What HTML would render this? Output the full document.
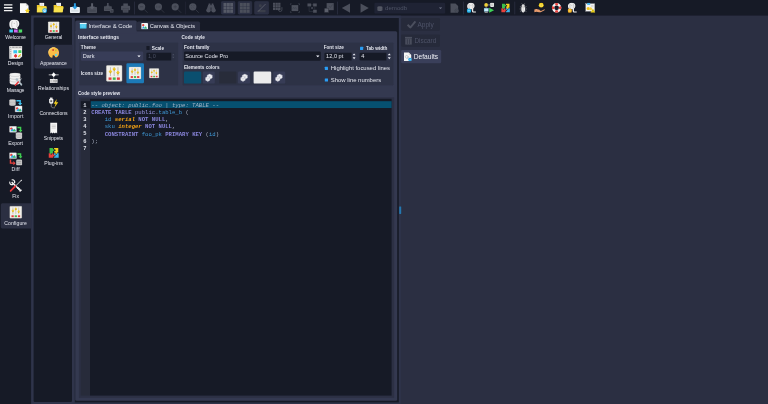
<!DOCTYPE html>
<html><head><meta charset="utf-8"><title>pgModeler - Configure</title>
<style>
html,body{margin:0;padding:0;width:768px;height:404px;overflow:hidden;background:#2b2f42}
#app{position:absolute;left:0;top:0;width:1920px;height:1010px;transform:scale(.4);transform-origin:0 0;filter:saturate(1.0001);font-family:"Liberation Sans",sans-serif;overflow:hidden}
#app div,#app span,#app svg{position:absolute;box-sizing:border-box}
#app span{white-space:pre;line-height:1}
#app span b,#app span u{text-decoration:none}
#app .m{font-family:"Liberation Mono",monospace}
#app .b{font-weight:bold}
</style></head><body><div id="app">
<div style="left:0px;top:0px;width:1920px;height:38.75px;background:#161a26;"></div>
<div style="left:0px;top:37.5px;width:77.75px;height:972.5px;background:#161a26;"></div>
<div style="left:77.75px;top:38.75px;width:924.25px;height:971.25px;background:#2f344a;"></div>
<div style="left:83.75px;top:44.25px;width:96.25px;height:960.5px;background:#161a26;border-radius:3px"></div>
<div style="left:186.5px;top:44.75px;width:810.75px;height:960.75px;background:#161a26;"></div>
<div style="left:188px;top:77.75px;width:805px;height:924.25px;background:#343950;border-radius:0 4px 4px 4px"></div>
<div style="left:188px;top:50.5px;width:153.5px;height:33.25px;background:#343950;border-radius:4px 4px 0 0"></div>
<div style="left:342.25px;top:53.5px;width:158px;height:23.75px;background:#2a2e41;border-radius:4px 4px 0 0"></div>
<div style="left:196.75px;top:104.5px;width:250.5px;height:110px;background:#2d3246;border:1px solid #3a3f58;border-radius:3px"></div>
<div style="left:454.75px;top:104.5px;width:529.75px;height:110px;background:#2d3246;border:1px solid #3a3f58;border-radius:3px"></div>
<div style="left:196px;top:241.5px;width:791.25px;height:754px;background:#2c3044;border:1.5px solid #3a4058;border-radius:3px"></div>
<div style="left:202px;top:247.25px;width:22.75px;height:741.25px;background:#272b3a;"></div>
<div style="left:224.75px;top:247.25px;width:754.5px;height:741.25px;background:#161a26;"></div>
<span style="left:195px;top:94.25px;font-size:12.4px;color:#e4e6ee;transform:translate(0,-50%);font-weight:bold;">Interface settings</span>
<span style="left:453.75px;top:94.25px;font-size:11.6px;color:#e4e6ee;transform:translate(0,-50%);font-weight:bold;">Code style</span>
<span style="left:195px;top:233px;font-size:11.65px;color:#e4e6ee;transform:translate(0,-50%);font-weight:bold;">Code style preview</span>
<span style="left:221px;top:64.5px;font-size:14.6px;color:#e4e6ee;transform:translate(0,-50%);">Interface &amp; Code</span>
<span style="left:374.25px;top:65.5px;font-size:14.2px;color:#e4e6ee;transform:translate(0,-50%);">Canvas &amp; Objects</span>
<span style="left:202px;top:117.75px;font-size:11.7px;color:#e4e6ee;transform:translate(0,-50%);font-weight:bold;">Theme</span>
<div style="left:202px;top:128.5px;width:155.75px;height:23px;background:#383d58;border-radius:3px"></div>
<span style="left:206.75px;top:140.25px;font-size:14px;color:#e4e6ee;transform:translate(0,-50%);">Dark</span>
<svg style="left:343px;top:137.5px;width:9px;height:5.5px" viewBox="0 0 10 6"><path d="M0 0H10L5 6Z" fill="#e8eaf2"/></svg>
<div style="left:365.75px;top:115px;width:8.25px;height:9.5px;background:#161a26;border-radius:1px"></div>
<span style="left:379.5px;top:119.75px;font-size:11.7px;color:#e4e6ee;transform:translate(0,-50%);font-weight:bold;">Scale</span>
<div style="left:365.75px;top:131.5px;width:72.5px;height:19px;background:#2b3043;border-radius:3px"></div>
<div style="left:365.75px;top:131.5px;width:62.25px;height:19px;background:#161a26;border-radius:3px 0 0 3px"></div>
<span style="left:370px;top:141px;font-size:14px;color:#4a4f63;transform:translate(0,-50%);">1,0</span>
<svg style="left:430px;top:133px;width:6.5px;height:14px" viewBox="0 0 10 22"><path d="M0 8H10L5 2Z M0 14H10L5 20Z" fill="#4a4f63"/></svg>
<span style="left:202px;top:183px;font-size:11.7px;color:#e4e6ee;transform:translate(0,-50%);font-weight:bold;">Icons size</span>
<div style="left:315.5px;top:158.25px;width:44px;height:49.75px;background:#1c7ab8;border-radius:3px"></div>
<span style="left:459.75px;top:118.25px;font-size:12px;color:#e4e6ee;transform:translate(0,-50%);font-weight:bold;">Font family</span>
<div style="left:459.75px;top:128.5px;width:342.5px;height:23px;background:#161a26;border-radius:3px"></div>
<span style="left:463px;top:140.25px;font-size:14px;color:#e4e6ee;transform:translate(0,-50%);">Source Code Pro</span>
<svg style="left:790px;top:137.5px;width:9px;height:5.5px" viewBox="0 0 10 6"><path d="M0 0H10L5 6Z" fill="#e8eaf2"/></svg>
<span style="left:809.25px;top:118.5px;font-size:11.6px;color:#e4e6ee;transform:translate(0,-50%);font-weight:bold;">Font size</span>
<div style="left:811.25px;top:131.5px;width:80px;height:19px;background:#30354a;border-radius:3px"></div>
<div style="left:811.25px;top:131.5px;width:67.25px;height:19px;background:#161a26;border-radius:3px 0 0 3px"></div>
<span style="left:815.25px;top:141px;font-size:14px;color:#e4e6ee;transform:translate(0,-50%);">12,0 pt</span>
<svg style="left:880.75px;top:132.25px;width:8.5px;height:17.5px" viewBox="0 0 10 22"><path d="M0 8H10L5 2Z M0 14H10L5 20Z" fill="#e8eaf2"/></svg>
<div style="left:899.25px;top:131.5px;width:79.75px;height:19px;background:#30354a;border-radius:3px"></div>
<div style="left:899.25px;top:131.5px;width:67px;height:19px;background:#161a26;border-radius:3px 0 0 3px"></div>
<span style="left:903.25px;top:141px;font-size:14px;color:#e4e6ee;transform:translate(0,-50%);">4</span>
<svg style="left:968.5px;top:132.25px;width:8.5px;height:17.5px" viewBox="0 0 10 22"><path d="M0 8H10L5 2Z M0 14H10L5 20Z" fill="#e8eaf2"/></svg>
<div style="left:900.25px;top:116.5px;width:7.75px;height:8px;background:#2a9df4;border-radius:1px"></div>
<span style="left:915px;top:120px;font-size:11.7px;color:#e4e6ee;transform:translate(0,-50%);font-weight:bold;">Tab width</span>
<span style="left:459.75px;top:168.5px;font-size:11.5px;color:#e4e6ee;transform:translate(0,-50%);font-weight:bold;">Elements colors</span>
<div style="left:459.75px;top:178.75px;width:43.5px;height:30px;background:#0a4f6f;border-radius:3px"></div>
<div style="left:507.25px;top:178.75px;width:29.75px;height:30px;background:#373c56;border-radius:3px"></div>
<svg style="left:510.88px;top:182.5px;width:22.5px;height:22.5px" viewBox="0 0 24 24"><g fill="#f4f4f6" stroke="#a9adbe" stroke-width="1" stroke-linejoin="round"><path d="M14 2l7 3.5v7L14 16l-7-3.500v-7z"/><path d="M9 9l6 3v6.500L9 22l-6-3.500V12z"/><path d="M3 12l6 3 6-3M9 15v7" fill="none"/><path d="M7 5.500l7 3.500 7-3.500M14 9v3" fill="none"/></g></svg>
<div style="left:547.5px;top:178.75px;width:43px;height:30px;background:#282c3a;border-radius:3px"></div>
<div style="left:595px;top:178.75px;width:30px;height:30px;background:#373c56;border-radius:3px"></div>
<svg style="left:598.75px;top:182.5px;width:22.5px;height:22.5px" viewBox="0 0 24 24"><g fill="#f4f4f6" stroke="#a9adbe" stroke-width="1" stroke-linejoin="round"><path d="M14 2l7 3.5v7L14 16l-7-3.500v-7z"/><path d="M9 9l6 3v6.500L9 22l-6-3.500V12z"/><path d="M3 12l6 3 6-3M9 15v7" fill="none"/><path d="M7 5.500l7 3.500 7-3.500M14 9v3" fill="none"/></g></svg>
<div style="left:634px;top:178.75px;width:44.25px;height:30px;background:#ececec;border-radius:3px"></div>
<div style="left:682.5px;top:178.75px;width:30px;height:30px;background:#373c56;border-radius:3px"></div>
<svg style="left:686.25px;top:182.5px;width:22.5px;height:22.5px" viewBox="0 0 24 24"><g fill="#f4f4f6" stroke="#a9adbe" stroke-width="1" stroke-linejoin="round"><path d="M14 2l7 3.5v7L14 16l-7-3.500v-7z"/><path d="M9 9l6 3v6.500L9 22l-6-3.500V12z"/><path d="M3 12l6 3 6-3M9 15v7" fill="none"/><path d="M7 5.500l7 3.500 7-3.500M14 9v3" fill="none"/></g></svg>
<div style="left:812px;top:167px;width:8px;height:8px;background:#2a9df4;border-radius:1px"></div>
<span style="left:827px;top:171.25px;font-size:14.8px;color:#e4e6ee;transform:translate(0,-50%);">Highlight focused lines</span>
<div style="left:812px;top:195.75px;width:8px;height:8px;background:#2a9df4;border-radius:1px"></div>
<span style="left:827px;top:199.75px;font-size:14.8px;color:#e4e6ee;transform:translate(0,-50%);">Show line numbers</span>
<div style="left:1002.75px;top:45.25px;width:97.5px;height:31.75px;background:#262a3a;border-radius:3px"></div>
<div style="left:1002.75px;top:85.5px;width:97.5px;height:31.75px;background:#262a3a;border-radius:3px"></div>
<div style="left:1002.75px;top:124.75px;width:99.75px;height:33.25px;background:#3a3f5a;border-radius:3px"></div>
<span style="left:1043.75px;top:61.5px;font-size:16.3px;color:#4e5368;transform:translate(0,-50%);">Apply</span>
<span style="left:1036.25px;top:101.5px;font-size:16px;color:#4e5368;transform:translate(0,-50%);">Discard</span>
<span style="left:1034.5px;top:141.5px;font-size:16.5px;color:#f0f1f6;transform:translate(0,-50%);">Defaults</span>
<svg style="left:1017px;top:51px;width:23.5px;height:20px" viewBox="0 0 24 20"><path d="M2 11l7 7L22 2" fill="none" stroke="#4b4f5e" stroke-width="5"/></svg>
<svg style="left:1012.25px;top:90.75px;width:18.5px;height:21.5px" viewBox="0 0 20 24"><path d="M0 1h20v4H0z M1 6h18v17H1z" fill="#4b4f5e"/><path d="M7 8v13M13 8v13" stroke="#262a3a" stroke-width="1.5"/></svg>
<div style="left:998.25px;top:515.5px;width:4.5px;height:19px;background:#2477b0;border-radius:1px"></div>
<div style="left:202px;top:252.5px;width:22.75px;height:18px;background:#161a26;"></div>
<div style="left:227px;top:253px;width:752.25px;height:17.25px;background:#065070;"></div>
<span class="m" style="left:212.25px;top:262.5px;font-size:13.5px;color:#dfe2ea;font-weight:bold;transform:translate(-50%,-50%)">1</span>
<span class="m" style="left:228.25px;top:262.5px;font-size:14px;color:#c8ccd8;transform:translate(0,-50%)"><u style="color:#a0b3c6;font-style:italic">-- object: public.foo | type: TABLE --</u></span>
<span class="m" style="left:212.25px;top:280.68px;font-size:13.5px;color:#dfe2ea;font-weight:bold;transform:translate(-50%,-50%)">2</span>
<span class="m" style="left:228.25px;top:280.68px;font-size:14px;color:#c8ccd8;transform:translate(0,-50%)"><b style="color:#8a86dc">CREATE TABLE</b> <u style="color:#9c98e6">public</u><u style="color:#a9afc0">.</u><u style="color:#3f9ad8">table_b</u> <u style="color:#a9afc0">(</u></span>
<span class="m" style="left:212.25px;top:298.85px;font-size:13.5px;color:#dfe2ea;font-weight:bold;transform:translate(-50%,-50%)">3</span>
<span class="m" style="left:228.25px;top:298.85px;font-size:14px;color:#c8ccd8;transform:translate(0,-50%)">    <u style="color:#3f9ad8">id</u> <b style="color:#f2a114;font-style:italic">serial</b> <b style="color:#8a86dc">NOT NULL</b><u style="color:#a9afc0">,</u></span>
<span class="m" style="left:212.25px;top:317.02px;font-size:13.5px;color:#dfe2ea;font-weight:bold;transform:translate(-50%,-50%)">4</span>
<span class="m" style="left:228.25px;top:317.02px;font-size:14px;color:#c8ccd8;transform:translate(0,-50%)">    <u style="color:#3f9ad8">sku</u> <b style="color:#f2a114;font-style:italic">integer</b> <b style="color:#8a86dc">NOT NULL</b><u style="color:#a9afc0">,</u></span>
<span class="m" style="left:212.25px;top:335.2px;font-size:13.5px;color:#dfe2ea;font-weight:bold;transform:translate(-50%,-50%)">5</span>
<span class="m" style="left:228.25px;top:335.2px;font-size:14px;color:#c8ccd8;transform:translate(0,-50%)">    <b style="color:#8a86dc">CONSTRAINT</b> <u style="color:#3f9ad8">foo_pk</u> <b style="color:#8a86dc">PRIMARY KEY</b> <u style="color:#a9afc0">(</u><u style="color:#3f9ad8">id</u><u style="color:#a9afc0">)</u></span>
<span class="m" style="left:212.25px;top:353.38px;font-size:13.5px;color:#dfe2ea;font-weight:bold;transform:translate(-50%,-50%)">6</span>
<span class="m" style="left:228.25px;top:353.38px;font-size:14px;color:#c8ccd8;transform:translate(0,-50%)"><u style="color:#a9afc0">);</u></span>
<span class="m" style="left:212.25px;top:371.55px;font-size:13.5px;color:#dfe2ea;font-weight:bold;transform:translate(-50%,-50%)">7</span>
<div style="left:1.5px;top:508px;width:76.25px;height:63px;background:#2b2f42;border-radius:4px 0 0 4px"></div>
<svg style="left:22.75px;top:48.5px;width:33px;height:33px" viewBox="0 0 32 32"><g transform="translate(-3.500,-1.500) scale(1.12)"><path d="M14 1C7 1 3 5 3 11c0 5 2 9 6 10l2-2c2 2 4 2 6 1v4c0 4 2 6 5 6h7v-3h-6c-2 0-2-1-2-3v-6c3-2 4-5 4-8 0-6-4-9-11-9z" fill="#f4f4f4"/><path d="M10 5c-2 4-2 9-.5 13M18 4c3 4 3 9 1.500 13M13 9.500h2.500" stroke="#b0b0b0" stroke-width="1.500" fill="none"/></g><rect x="0" y="22.800" width="32" height="9.200" fill="#161a26"/><rect x="0" y="24" width="9" height="7.600" fill="#3fd0f4"/><rect x="11.500" y="24" width="9" height="7.600" fill="#cf66ee"/><rect x="23" y="24" width="9" height="7.600" fill="#4ddc66"/></svg>
<span style="left:38.87px;top:92.5px;font-size:12.8px;color:#e4e6ee;transform:translate(-50%,-50%);letter-spacing:-0.266px;">Welcome</span>
<svg style="left:22.75px;top:115px;width:33px;height:33px" viewBox="0 0 32 32"><path d="M.5.500h31V25l-6 6H.5z" fill="#f6f6f3"/><path d="M31.500 25h-6v6z" fill="#c9c9c9"/><rect x=".5" y=".5" width="31" height="6" fill="#d9d9d9"/><rect x=".5" y=".5" width="6" height="30.500" fill="#e2e2e2"/><path d="M3 3.500h28" stroke="#777" stroke-width="3" stroke-dasharray="1.200 2.300"/><path d="M3.500 8v23" stroke="#888" stroke-width="3" stroke-dasharray="1.200 3.300"/><rect x="10.200" y="10.200" width="9" height="7.500" fill="#38c4f2"/><rect x="22.200" y="10.200" width="7.400" height="6.800" fill="#45d45a"/><path d="M15.600 19.500l4 4.500-4 4.500-4-4.500z" fill="#e8353a"/><circle cx="15.600" cy="24" r="3.300" fill="#e8353a"/><path d="M21 27.500l1-3 5-5 2 2-5 5z" fill="#e2c21c"/></svg>
<span style="left:38.93px;top:159px;font-size:12.8px;color:#e4e6ee;transform:translate(-50%,-50%);letter-spacing:-0.140px;">Design</span>
<svg style="left:22.75px;top:181.5px;width:33px;height:33px" viewBox="0 0 32 32"><path d="M1 4.64v19.72c0 6.032 26 6.032 26 0v-19.72z" fill="#f1f1f1"/><ellipse cx="14.0" cy="4.64" rx="13.0" ry="4.64" fill="#f1f1f1" stroke="#b4b4b4" stroke-width="1"/><path d="M1 11.213333333333333c0 6.032 26 6.032 26 0M1 17.786666666666665c0 6.032 26 6.032 26 0" stroke="#b4b4b4" stroke-width="1.200" fill="none"/><path d="M18 16l12 13" stroke="#b9c6ce" stroke-width="3.200"/><circle cx="18.500" cy="16.500" r="3" fill="#aebcc5"/><circle cx="29.500" cy="28.500" r="2.600" fill="#aebcc5"/><path d="M30 14l-8 8.500" stroke="#c5d0d6" stroke-width="2.200"/><path d="M22 22.500l-7 7.500" stroke="#e8353a" stroke-width="3.600" stroke-linecap="round"/></svg>
<span style="left:38.77px;top:225.5px;font-size:12.8px;color:#e4e6ee;transform:translate(-50%,-50%);letter-spacing:-0.459px;">Manage</span>
<svg style="left:22.75px;top:248px;width:33px;height:33px" viewBox="0 0 32 32"><path d="M0 2.56v10.879999999999999c0 3.3280000000000003 15.5 3.3280000000000003 15.5 0v-10.879999999999999z" fill="#d6d6d6"/><ellipse cx="7.75" cy="2.56" rx="7.75" ry="2.56" fill="#d6d6d6" stroke="#a4a4a4" stroke-width="1"/><path d="M0 6.1866666666666665c0 3.3280000000000003 15.5 3.3280000000000003 15.5 0M0 9.813333333333333c0 3.3280000000000003 15.5 3.3280000000000003 15.5 0" stroke="#a4a4a4" stroke-width="1.200" fill="none"/><path d="M17.500 3.800h9v7" stroke="#3cc0ee" stroke-width="3.600" fill="none"/><path d="M21.500 9.500h10l-5 5.500z" fill="#3cc0ee"/><rect x="14.5" y="16.5" width="17" height="14.5" rx="1" fill="#f6f6f6" stroke="#c4c4c4"/><circle cx="19.26" cy="22.3" r="2.9000000000000004" fill="#e8413c"/><path d="M16.5 29.0l5.1 -7.25 3.4000000000000004 4.35 2.55 -3.625 3.4000000000000004 6.525z" fill="#35a7e8"/><path d="M22.15 29.0l3.74 -6.525 3.74 6.525z" fill="#43c356"/></svg>
<span style="left:39.23px;top:292px;font-size:12.8px;color:#e4e6ee;transform:translate(-50%,-50%);letter-spacing:0.455px;">Import</span>
<svg style="left:22.75px;top:314.5px;width:33px;height:33px" viewBox="0 0 32 32"><rect x="0.5" y="0.5" width="17" height="14.5" rx="1" fill="#f6f6f6" stroke="#c4c4c4"/><circle cx="5.260000000000001" cy="6.300000000000001" r="2.9000000000000004" fill="#e8413c"/><path d="M2.5 13.0l5.1 -7.25 3.4000000000000004 4.35 2.55 -3.625 3.4000000000000004 6.525z" fill="#35a7e8"/><path d="M8.15 13.0l3.74 -6.525 3.74 6.525z" fill="#43c356"/><path d="M20 3.800h7.500v7" stroke="#3fcf52" stroke-width="3.600" fill="none"/><path d="M22.500 9.500h10l-5 5.500z" fill="#3fcf52"/><path d="M16 18.06v10.879999999999999c0 3.3280000000000003 15.5 3.3280000000000003 15.5 0v-10.879999999999999z" fill="#d6d6d6"/><ellipse cx="23.75" cy="18.06" rx="7.75" ry="2.56" fill="#d6d6d6" stroke="#a4a4a4" stroke-width="1"/><path d="M16 21.686666666666664c0 3.3280000000000003 15.5 3.3280000000000003 15.5 0M16 25.313333333333333c0 3.3280000000000003 15.5 3.3280000000000003 15.5 0" stroke="#a4a4a4" stroke-width="1.200" fill="none"/></svg>
<span style="left:39px;top:358.5px;font-size:12.8px;color:#e4e6ee;transform:translate(-50%,-50%);letter-spacing:0.001px;">Export</span>
<svg style="left:22.75px;top:381px;width:33px;height:33px" viewBox="0 0 32 32"><rect x="0.5" y="0.5" width="17" height="14.5" rx="1" fill="#f6f6f6" stroke="#c4c4c4"/><circle cx="5.260000000000001" cy="6.300000000000001" r="2.9000000000000004" fill="#e8413c"/><path d="M2.5 13.0l5.1 -7.25 3.4000000000000004 4.35 2.55 -3.625 3.4000000000000004 6.525z" fill="#35a7e8"/><path d="M8.15 13.0l3.74 -6.525 3.74 6.525z" fill="#43c356"/><path d="M20 3.800h7.500v7" stroke="#3fcf52" stroke-width="3.600" fill="none"/><path d="M22.500 9.500h10l-5 5.500z" fill="#3fcf52"/><path d="M3 17v9h8" stroke="#e8413c" stroke-width="3.600" fill="none"/><path d="M10 21v10l5.500-5z" fill="#e8413c"/><rect x="17" y="17" width="14.500" height="14.500" rx="3" fill="#c4c4c4"/><path d="M19.500 22h9.500M19.500 26.500h9.500" stroke="#8d8d8d" stroke-width="1.400"/></svg>
<span style="left:39.19px;top:425px;font-size:12.8px;color:#e4e6ee;transform:translate(-50%,-50%);letter-spacing:0.383px;">Diff</span>
<svg style="left:22.75px;top:447.5px;width:33px;height:33px" viewBox="0 0 32 32"><path d="M6 7l20 19" stroke="#f4f4f4" stroke-width="3.600"/><path d="M1.500 6a5.500 5.500 0 0 0 8 6.500M6 1.500a5.500 5.500 0 0 1 6.500 8" stroke="#f4f4f4" stroke-width="3" fill="none"/><path d="M30.500 26a5.500 5.500 0 0 1-8-6.500M26 30.500a5.500 5.500 0 0 0-6.500-8" stroke="#f4f4f4" stroke-width="3" fill="none"/><path d="M29 3L16 16" stroke="#f4f4f4" stroke-width="2"/><path d="M31.500.5l-4.500 2 2.500 2.500z" fill="#f4f4f4"/><path d="M15 17L3.500 28.500" stroke="#e8353a" stroke-width="4.400" stroke-linecap="round"/></svg>
<span style="left:38.95px;top:491.5px;font-size:12.8px;color:#e4e6ee;transform:translate(-50%,-50%);letter-spacing:-0.104px;">Fix</span>
<svg style="left:22.75px;top:514px;width:33px;height:33px" viewBox="0 0 32 32"><rect x="1.500" y="1.500" width="29" height="29" rx="1.500" fill="#f3f1ec" stroke="#c9c6be" stroke-width="1"/><path d="M9 4.500V21M16 4.500V21M23 4.500V21" stroke="#a29f97" stroke-width="1.200"/><path d="M5.500 12h7l-3.500 4.500z M12.500 7.500h7l-3.500 4.500z M19.500 14h7l-3.500 4.500z" fill="#e3b30c"/><circle cx="9" cy="11.500" r="2" fill="#f2c928"/><circle cx="16" cy="7" r="2" fill="#f2c928"/><circle cx="23" cy="13.500" r="2" fill="#f2c928"/><rect x="5.500" y="23.500" width="5.500" height="4.500" fill="#e23b3b"/><rect x="13.250" y="23.500" width="5.500" height="4.500" fill="#3fb54a"/><rect x="21" y="23.500" width="5.500" height="4.500" fill="#e23b3b"/></svg>
<span style="left:39.07px;top:558px;font-size:12.8px;color:#e4e6ee;transform:translate(-50%,-50%);letter-spacing:0.139px;">Configure</span>
<div style="left:86px;top:111.75px;width:94.5px;height:58.75px;background:#2b2f42;border-radius:5px 0 0 5px"></div>
<svg style="left:118.75px;top:53px;width:30.5px;height:30.5px" viewBox="0 0 32 32"><rect x="1.500" y="1.500" width="29" height="29" rx="1.500" fill="#f3f1ec" stroke="#c9c6be" stroke-width="1"/><path d="M9 4.500V21M16 4.500V21M23 4.500V21" stroke="#a29f97" stroke-width="1.200"/><path d="M5.500 12h7l-3.500 4.500z M12.500 7.500h7l-3.500 4.500z M19.500 14h7l-3.500 4.500z" fill="#e3b30c"/><circle cx="9" cy="11.500" r="2" fill="#f2c928"/><circle cx="16" cy="7" r="2" fill="#f2c928"/><circle cx="23" cy="13.500" r="2" fill="#f2c928"/><rect x="5.500" y="23.500" width="5.500" height="4.500" fill="#e23b3b"/><rect x="13.250" y="23.500" width="5.500" height="4.500" fill="#3fb54a"/><rect x="21" y="23.500" width="5.500" height="4.500" fill="#e23b3b"/></svg>
<span style="left:133.6px;top:94.75px;font-size:12.8px;color:#e4e6ee;transform:translate(-50%,-50%);letter-spacing:-0.291px;">General</span>
<svg style="left:118.75px;top:115.87px;width:30.5px;height:30.5px" viewBox="0 0 32 32"><path d="M16 2C8 2 2 8 2 16c0 7 4 13 9 13.500 2 .2 2.500-1.500 2-3-.5-2 1-3.500 3-3 2 .5 3 2.500 4 4.500 1 1.500 3 1.500 5 0 3.500-2.500 5-7 5-12C30 8 24 2 16 2z" fill="#fbbd45"/><path d="M16 2C8 2 2 8 2 16c0 2 .3 4 1 5.500C3.500 12 9 5 20 2.700 18.700 2.200 17.400 2 16 2z" fill="#fdd274" opacity=".8"/><circle cx="14.500" cy="9.500" r="2.500" fill="#d6432e"/><circle cx="21.500" cy="10.500" r="2.200" fill="#b9c43c"/><circle cx="25.500" cy="16.500" r="2.300" fill="#d8b58c"/><circle cx="22" cy="22.500" r="3" fill="#4fd8f7"/></svg>
<span style="left:133.64px;top:157.62px;font-size:12.8px;color:#e4e6ee;transform:translate(-50%,-50%);letter-spacing:-0.228px;">Appearance</span>
<svg style="left:118.75px;top:178.75px;width:30.5px;height:30.5px" viewBox="0 0 32 32"><path d="M3 8.500H29" stroke="#e6e6e6" stroke-width="2"/><path d="M16 2l5.500 6.500L16 15l-5.500-6.500z" fill="#fff"/><path d="M16 15v5" stroke="#cfcfcf" stroke-width="1.500"/><rect x="6" y="19.500" width="20" height="10" fill="#f1f1f1"/><path d="M9 22v5M12.500 22.500v1M12.500 25.500v1M16 22v5M19 22h4v5h-4z" stroke="#555" stroke-width="1.200" fill="none"/></svg>
<span style="left:133.77px;top:220.5px;font-size:12.8px;color:#e4e6ee;transform:translate(-50%,-50%);letter-spacing:0.032px;">Relationships</span>
<svg style="left:118.75px;top:241.62px;width:30.5px;height:30.5px" viewBox="0 0 32 32"><rect x="6" y="2" width="7" height="4" fill="#e8e8e8"/><path d="M4 6h11v8c0 2-1.500 4-5.500 4S4 16 4 14z" fill="#f4f4f4"/><rect x="7" y="9" width="5" height="5" fill="#666"/><path d="M9.500 18v6c0 3 2 5 6 5h4" stroke="#bdbdbd" stroke-width="1.600" fill="none"/><path d="M24 6l-8 12h5l-3 10 10-14h-5.500z" fill="#f7d21e"/></svg>
<span style="left:133.72px;top:283.38px;font-size:12.8px;color:#e4e6ee;transform:translate(-50%,-50%);letter-spacing:-0.059px;">Connections</span>
<svg style="left:118.75px;top:304.5px;width:30.5px;height:30.5px" viewBox="0 0 32 32"><path d="M7 2h18v28l-3-2.500-3 2.500-3-2.500-3 2.500-3-2.500L7 30z" fill="#f6f6f6"/><path d="M10.500 8h11M10.500 12h11M10.500 16h11" stroke="#bdbdbd" stroke-width="1.800"/></svg>
<span style="left:133.65px;top:346.25px;font-size:12.8px;color:#e4e6ee;transform:translate(-50%,-50%);letter-spacing:-0.195px;">Snippets</span>
<svg style="left:118.75px;top:367.38px;width:30.5px;height:30.5px" viewBox="0 0 32 32"><path d="M5 3h9v4c1.500-1.500 4-.5 4 1.500s-2.500 3-4 1.500V16H10c1.500 1.500.5 4-1.500 4S5.500 17.500 7 16H5z" fill="#3cc04a" transform="translate(0,0)"/><path d="M17 3h11v12h-4c1.500 1.500.5 4-1.500 4s-3-2.500-1.500-4h-4v-4c1.500 1.500 4 .5 4-1.500S18.500 5.500 17 7z" fill="#f4d21f"/><path d="M3 17h5c-1.500 1.500-.5 4 1.500 4s3-2.500 1.500-4h4v4c1.500-1.500 4-.5 4 1.500s-2.500 3-4 1.500V29H3z" fill="#e8413c"/><path d="M17 17h4c-1.500 1.500-.5 4 1.500 4s3-2.500 1.500-4h5v12H17v-4c1.500 1.500 4 .5 4-1.500s-2.500-3-4-1.500z" fill="#3db4ea"/></svg>
<span style="left:133.75px;top:409.12px;font-size:12.8px;color:#e4e6ee;transform:translate(-50%,-50%);letter-spacing:0.001px;">Plug-ins</span>
<svg style="left:263.88px;top:161.5px;width:43px;height:43px" viewBox="0 0 32 32"><rect x="1.500" y="1.500" width="29" height="29" rx="1.500" fill="#f3f1ec" stroke="#c9c6be" stroke-width="1"/><path d="M9 4.500V21M16 4.500V21M23 4.500V21" stroke="#a29f97" stroke-width="1.200"/><path d="M5.500 12h7l-3.500 4.500z M12.500 7.500h7l-3.500 4.500z M19.500 14h7l-3.500 4.500z" fill="#e3b30c"/><circle cx="9" cy="11.500" r="2" fill="#f2c928"/><circle cx="16" cy="7" r="2" fill="#f2c928"/><circle cx="23" cy="13.500" r="2" fill="#f2c928"/><rect x="5.500" y="23.500" width="5.500" height="4.500" fill="#e23b3b"/><rect x="13.250" y="23.500" width="5.500" height="4.500" fill="#3fb54a"/><rect x="21" y="23.500" width="5.500" height="4.500" fill="#e23b3b"/></svg>
<svg style="left:321px;top:166.25px;width:33px;height:33px" viewBox="0 0 32 32"><rect x="1.500" y="1.500" width="29" height="29" rx="1.500" fill="#f3f1ec" stroke="#c9c6be" stroke-width="1"/><path d="M9 4.500V21M16 4.500V21M23 4.500V21" stroke="#a29f97" stroke-width="1.200"/><path d="M5.500 12h7l-3.500 4.500z M12.500 7.500h7l-3.500 4.500z M19.500 14h7l-3.500 4.500z" fill="#e3b30c"/><circle cx="9" cy="11.500" r="2" fill="#f2c928"/><circle cx="16" cy="7" r="2" fill="#f2c928"/><circle cx="23" cy="13.500" r="2" fill="#f2c928"/><rect x="5.500" y="23.500" width="5.500" height="4.500" fill="#e23b3b"/><rect x="13.250" y="23.500" width="5.500" height="4.500" fill="#3fb54a"/><rect x="21" y="23.500" width="5.500" height="4.500" fill="#e23b3b"/></svg>
<svg style="left:372px;top:169.5px;width:26.5px;height:26.5px" viewBox="0 0 32 32"><rect x="1.500" y="1.500" width="29" height="29" rx="1.500" fill="#f3f1ec" stroke="#c9c6be" stroke-width="1"/><path d="M9 4.500V21M16 4.500V21M23 4.500V21" stroke="#a29f97" stroke-width="1.200"/><path d="M5.500 12h7l-3.500 4.500z M12.500 7.500h7l-3.500 4.500z M19.500 14h7l-3.500 4.500z" fill="#e3b30c"/><circle cx="9" cy="11.500" r="2" fill="#f2c928"/><circle cx="16" cy="7" r="2" fill="#f2c928"/><circle cx="23" cy="13.500" r="2" fill="#f2c928"/><rect x="5.500" y="23.500" width="5.500" height="4.500" fill="#e23b3b"/><rect x="13.250" y="23.500" width="5.500" height="4.500" fill="#3fb54a"/><rect x="21" y="23.500" width="5.500" height="4.500" fill="#e23b3b"/></svg>
<svg style="left:199px;top:56.5px;width:18px;height:15px" viewBox="0 0 30 26"><rect x="0" y="0" width="30" height="26" rx="2" fill="#3ec6f0"/><rect x="0" y="0" width="30" height="6" fill="#eaf7fc"/><path d="M4 12h22M4 17h22M11 9v13M19 9v13" stroke="#8adcf5" stroke-width="1.500"/></svg>
<svg style="left:353px;top:57px;width:17px;height:16.5px" viewBox="0 0 30 28"><rect x="0" y="0" width="30" height="28" rx="2" fill="#f4f4f4"/><circle cx="9" cy="10" r="5" fill="#e8413c"/><path d="M3 25l7-11 5 7 4-5 8 9z" fill="#35a7e8"/><path d="M13 25l6-10 6 10z" fill="#43c356"/></svg>
<svg style="left:1007.25px;top:129.5px;width:24px;height:24px" viewBox="0 0 32 32"><path d="M4 2h16l8 8v20H4z" fill="#f6f6f6"/><path d="M20 2v8h8z" fill="#d6d6d6"/><circle cx="13" cy="16" r="4.500" fill="none" stroke="#9aa0aa" stroke-width="3" stroke-dasharray="2.400 1.400"/><circle cx="19" cy="21" r="3" fill="none" stroke="#b0b5be" stroke-width="2.200" stroke-dasharray="1.800 1.200"/><circle cx="24" cy="25" r="6" fill="#27a9ea"/><path d="M21 25l2.200 2.200 3.800-4.200" stroke="#e8f7ff" stroke-width="1.800" fill="none"/></svg>
<div style="left:553.25px;top:3px;width:34.25px;height:33px;background:#2b2f42;border-radius:3px;border:1px solid #363b52"></div>
<div style="left:594.5px;top:3px;width:35.25px;height:33px;background:#2b2f42;border-radius:3px;border:1px solid #363b52"></div>
<div style="left:636px;top:3px;width:35.75px;height:33px;background:#2b2f42;border-radius:3px;border:1px solid #363b52"></div>
<svg style="left:8.75px;top:8.25px;width:23px;height:23px" viewBox="0 0 32 32"><path d="M1 6h30M1 16h30M1 26h30" stroke="#f4f4f4" stroke-width="4.800"/></svg>
<svg style="left:49.25px;top:6.5px;width:26.5px;height:26.5px" viewBox="0 0 32 32"><path d="M1 1h18l8 8v22H1z" fill="#fbfbfb"/><path d="M19 1v8h8z" fill="#cfcfcf"/><path d="M23.500 16l2.400 5 5.500.8-4 3.800 1 5.400-4.900-2.600-4.900 2.600 1-5.400-4-3.800 5.500-.8z" fill="#f5d327"/></svg>
<svg style="left:90.75px;top:6.25px;width:27px;height:27px" viewBox="0 0 32 32"><path d="M9 1h14v15H9z" fill="#f7f7f7"/><path d="M12 5h8M12 8.500h8" stroke="#bdbdbd" stroke-width="1.500"/><path d="M1 8h9l2 3h18l-2 18H1z" fill="#ecc92e"/><path d="M1 29l3-15h27l-3.500 15z" fill="#f8e24e"/><circle cx="24.500" cy="24.500" r="7" fill="#1ea3ea"/><circle cx="24.500" cy="24.500" r="4.400" fill="#d9f1fc"/><path d="M24.500 21.500v3h2.500" stroke="#1ea3ea" stroke-width="1.400" fill="none"/></svg>
<svg style="left:133.25px;top:6.25px;width:27px;height:27px" viewBox="0 0 32 32"><path d="M9 1h14v15H9z" fill="#f7f7f7"/><path d="M12 5h8M12 8.500h8" stroke="#bdbdbd" stroke-width="1.500"/><path d="M1 8h9l2 3h18l-2 18H1z" fill="#ecc92e"/><path d="M1 29l3-15h27l-3.500 15z" fill="#f8e24e"/></svg>
<svg style="left:174.25px;top:6.5px;width:26.5px;height:26.5px" viewBox="0 0 32 32"><rect x="1" y="13" width="30" height="18" rx="2.500" fill="#eef3f6"/><path d="M5 24.500h22" stroke="#b9c6cf" stroke-width="2.400"/><path d="M1 19h30" stroke="#b9c6cf" stroke-width="1" opacity=".6"/><path d="M13 1h6v10h5.500L16 20 7.500 11H13z" fill="#2aa0e6"/></svg>
<svg style="left:216.75px;top:6.5px;width:26.5px;height:26.5px" viewBox="0 0 32 32"><rect x="1" y="13" width="30" height="18" rx="2.500" fill="#4b4f5b"/><path d="M5 24.500h22" stroke="#3a3e4a" stroke-width="2.400"/><path d="M1 19h30" stroke="#3a3e4a" stroke-width="1" opacity=".6"/><path d="M13 1h6v10h5.500L16 20 7.500 11H13z" fill="#5a5e6a"/></svg>
<svg style="left:258.5px;top:6.5px;width:26.5px;height:26.5px" viewBox="0 0 32 32"><g transform="scale(.8)"><rect x="1" y="13" width="30" height="18" rx="2.500" fill="#4b4f5b"/><path d="M5 24.500h22" stroke="#3a3e4a" stroke-width="2.400"/><path d="M1 19h30" stroke="#3a3e4a" stroke-width="1" opacity=".6"/><path d="M13 1h6v10h5.500L16 20 7.500 11H13z" fill="#4b4f5b"/></g><rect x="19" y="19" width="11" height="11" rx="2" fill="#4b4f5b"/><rect x="21.500" y="22" width="6" height="6" fill="#3a3e4a"/></svg>
<svg style="left:301px;top:6.75px;width:26px;height:26px" viewBox="0 0 32 32"><rect x="9" y="2" width="14" height="8" fill="#4b4f5b"/><rect x="2" y="9" width="28" height="14" rx="3" fill="#4b4f5b"/><rect x="8" y="18" width="16" height="12" fill="#4b4f5b" stroke="#3a3e4a" stroke-width="1.500"/><path d="M11 23h10M11 26.500h10" stroke="#3a3e4a" stroke-width="1.400"/></svg>
<svg style="left:344.25px;top:6.5px;width:26.5px;height:26.5px" viewBox="0 0 32 32"><circle cx="12" cy="12" r="11" fill="#4b4f5b"/><path d="M19 19l11 11" stroke="#3a3e4a" stroke-width="2.200"/><path d="M7 12h10" stroke="#3a3e4a" stroke-width="2.400"/></svg>
<svg style="left:385.75px;top:6.5px;width:26.5px;height:26.5px" viewBox="0 0 32 32"><circle cx="12" cy="12" r="11" fill="#4b4f5b"/><path d="M19 19l11 11" stroke="#3a3e4a" stroke-width="2.200"/><path d="M7 9v6M10.500 10.500v.1M10.500 14v.1M14 9v6M17 9v6" stroke="#3a3e4a" stroke-width="1.600"/></svg>
<svg style="left:428px;top:6.5px;width:26.5px;height:26.5px" viewBox="0 0 32 32"><circle cx="12" cy="12" r="11" fill="#4b4f5b"/><path d="M19 19l11 11" stroke="#3a3e4a" stroke-width="2.200"/><path d="M7 12h10M12 7v10" stroke="#3a3e4a" stroke-width="2.400"/></svg>
<svg style="left:471.75px;top:6.5px;width:26.5px;height:26.5px" viewBox="0 0 32 32"><circle cx="12" cy="12" r="11" fill="#4b4f5b"/><path d="M19 19l11 11" stroke="#3a3e4a" stroke-width="2.200"/><path d="M7 7l3 3M17 7l-3 3M7 17l3-3M17 17l-3-3" stroke="#3a3e4a" stroke-width="1.600"/></svg>
<svg style="left:514px;top:6.25px;width:27px;height:27px" viewBox="0 0 32 32"><path d="M9 3h5v10H9z M18 3h5v10h-5z" fill="#4b4f5b"/><path d="M8 7l-5 15h12V7z M24 7l5 15H17V7z" fill="#4b4f5b"/><circle cx="8.500" cy="23.500" r="6.500" fill="#4b4f5b"/><circle cx="23.500" cy="23.500" r="6.500" fill="#4b4f5b"/><rect x="13" y="9" width="6" height="6" fill="#4b4f5b"/></svg>
<svg style="left:681.5px;top:6.25px;width:27px;height:27px" viewBox="0 0 32 32"><g transform="scale(.72)"><rect x="0.5" y="0.5" width="9.600" height="9.600" fill="#4b4f5b"/><rect x="11.2" y="0.5" width="9.600" height="9.600" fill="#4b4f5b"/><rect x="21.9" y="0.5" width="9.600" height="9.600" fill="#4b4f5b"/><rect x="0.5" y="11.2" width="9.600" height="9.600" fill="#4b4f5b"/><rect x="11.2" y="11.2" width="9.600" height="9.600" fill="#4b4f5b"/><rect x="21.9" y="11.2" width="9.600" height="9.600" fill="#4b4f5b"/><rect x="0.5" y="21.9" width="9.600" height="9.600" fill="#4b4f5b"/><rect x="11.2" y="21.9" width="9.600" height="9.600" fill="#4b4f5b"/><rect x="21.9" y="21.9" width="9.600" height="9.600" fill="#4b4f5b"/></g><path d="M27 14v8a5 5 0 0 1-10 0v-2" stroke="#4b4f5b" stroke-width="2.400" fill="none"/><path d="M13.500 22l3.500-4 3.500 4z" fill="#4b4f5b"/></svg>
<svg style="left:724.25px;top:6.5px;width:26.5px;height:26.5px" viewBox="0 0 32 32"><rect x="6" y="7" width="20" height="18" fill="#4b4f5b"/><path d="M2 7V3h4M26 3h4v4M30 25v4h-4M6 29H2v-4" stroke="#4b4f5b" stroke-width="1.600" fill="none"/><path d="M9 19l3-6 3 5 3-4 4 6" stroke="#3a3e4a" stroke-width="1.600" fill="none"/></svg>
<svg style="left:766.75px;top:6.5px;width:26.5px;height:26.5px" viewBox="0 0 32 32"><rect x="2" y="2" width="11" height="9" fill="#4b4f5b"/><rect x="19" y="2" width="11" height="9" fill="#4b4f5b"/><rect x="19" y="21" width="11" height="9" fill="#4b4f5b"/><path d="M7 11v15h12M13 6h6M24 11v10" stroke="#3a3e4a" stroke-width="1.600" fill="none"/><path d="M13 13h6v6h-6z" fill="#3a3e4a"/></svg>
<svg style="left:809px;top:6.25px;width:27px;height:27px" viewBox="0 0 32 32"><rect x="9" y="2" width="21" height="21" fill="#4b4f5b"/><rect x="2" y="17" width="13" height="13" fill="#5a5e6a" stroke="#161a26" stroke-width="1"/><path d="M16 11l4 4 7-9" stroke="#3a3e4a" stroke-width="2" fill="none"/></svg>
<svg style="left:851.25px;top:5.5px;width:28.5px;height:28.5px" viewBox="0 0 32 32"><path d="M27 3v26L4 16z" fill="#4b4f5b"/></svg>
<svg style="left:896.75px;top:5.5px;width:28.5px;height:28.5px" viewBox="0 0 32 32"><path d="M5 3v26l23-13z" fill="#4b4f5b"/></svg>
<svg style="left:1122.5px;top:6.5px;width:26.5px;height:26.5px" viewBox="0 0 32 32"><path d="M4 2h15l8 8v20H4z" fill="#4b4f5b"/><circle cx="23" cy="24" r="5.500" fill="#4b4f5b" stroke="#3a3e4a" stroke-width="1.600"/><circle cx="23" cy="24" r="1.800" fill="#3a3e4a"/></svg>
<svg style="left:1166.5px;top:6.25px;width:27px;height:27px" viewBox="0 0 32 32"><g transform="translate(-2,0)"><path d="M14 1C7 1 3 5 3 11c0 5 2 9 6 10l2-2c2 2 4 2 6 1v4c0 4 2 6 5 6h7v-3h-6c-2 0-2-1-2-3v-6c3-2 4-5 4-8 0-6-4-9-11-9z" fill="#ececec"/><path d="M10 5c-2 4-2 9-.5 13M18 4c3 4 3 9 1.500 13M13 9.500h2.500" stroke="#a9a9a9" stroke-width="1.500" fill="none"/></g><circle cx="6.500" cy="24.500" r="6.500" fill="#23b4ec"/><path d="M3.500 24.500c2-2.500 4-2.500 6 0-2 2.500-4 2.500-6 0z" fill="#9fdcf7"/></svg>
<svg style="left:1209px;top:6.25px;width:27px;height:27px" viewBox="0 0 32 32"><circle cx="7.500" cy="7.500" r="5.500" fill="#f0d23a"/><path d="M13 7.500h7" stroke="#d8d8d8" stroke-width="1.600"/><rect x="19.500" y="1" width="11.500" height="12.500" rx="2.500" fill="#e6e6e6"/><path d="M22 5.500h6.500M22 9h6.500" stroke="#a8a8a8" stroke-width="1.300"/><path d="M7.500 13v5" stroke="#d8d8d8" stroke-width="1.600"/><rect x="1.500" y="17.500" width="12.500" height="9" fill="#c6ecfb" stroke="#7fcff2" stroke-width="1.200"/><rect x="3" y="27.500" width="9.500" height="3.500" fill="#9a9a9a"/><path d="M16.500 16l14.500 7.500-14.500 7.500z" fill="#3fd457"/></svg>
<svg style="left:1250.75px;top:6.75px;width:26px;height:26px" viewBox="0 0 32 32"><path d="M5 3h9v4c1.500-1.500 4-.5 4 1.500s-2.500 3-4 1.500V16H10c1.500 1.500.5 4-1.500 4S5.500 17.500 7 16H5z" fill="#3cc04a" transform="translate(0,0)"/><path d="M17 3h11v12h-4c1.500 1.500.5 4-1.500 4s-3-2.500-1.500-4h-4v-4c1.500 1.500 4 .5 4-1.500S18.500 5.500 17 7z" fill="#f4d21f"/><path d="M3 17h5c-1.500 1.500-.5 4 1.500 4s3-2.500 1.500-4h4v4c1.500-1.500 4-.5 4 1.500s-2.500 3-4 1.500V29H3z" fill="#e8413c"/><path d="M17 17h4c-1.500 1.500-.5 4 1.500 4s3-2.500 1.500-4h5v12H17v-4c1.500 1.500 4 .5 4-1.500s-2.500-3-4-1.500z" fill="#3db4ea"/></svg>
<svg style="left:1294.5px;top:6.75px;width:26px;height:26px" viewBox="0 0 32 32"><ellipse cx="16" cy="19" rx="5.800" ry="10.500" fill="#f1f1f1"/><path d="M11 9.500a5 5 0 0 1 10 0z" fill="#dcdcdc"/><path d="M11.500 2l2.500 3.500M20.500 2L18 5.500" stroke="#cfcfcf" stroke-width="1.400"/><path d="M10.500 14L6 11.500M10 19H5M10.500 24L6 27M21.500 14l4.500-2.500M22 19h5M21.500 24l4.500 3" stroke="#cfcfcf" stroke-width="1.300"/><path d="M16 12v17" stroke="#a5a5a5" stroke-width="1.200"/><path d="M10.500 12.500h11" stroke="#9a9a9a" stroke-width="1.600"/></svg>
<svg style="left:1335px;top:6px;width:27.5px;height:27.5px" viewBox="0 0 32 32"><circle cx="21" cy="8" r="7" fill="#f5d21c"/><circle cx="21" cy="8" r="4.400" fill="#f9e35e"/><path d="M21 5v6M19.500 6.500h3M19.500 9.500h3" stroke="#d9b10f" stroke-width="1"/><path d="M1 21c3-2 6-2 9-1l6 1.500c2 .3 2 2.500 0 2.500h-3l9 .5 7-4c1.500-.8 3 .8 1.500 2L21 28c-2 1-4 1-6 .5L7 27l-6 1.500z" fill="#e69a6c"/></svg>
<svg style="left:1377.75px;top:6.25px;width:27px;height:27px" viewBox="0 0 32 32"><circle cx="16" cy="16" r="10.500" fill="none" stroke="#f5f5f5" stroke-width="7"/><path d="M16 2a14 14 0 0 1 9.900 4.100l-4.950 4.950A7 7 0 0 0 16 9z" fill="#e8413c" transform="rotate(-22.500 16 16)"/><path d="M16 2a14 14 0 0 1 9.900 4.100l-4.950 4.950A7 7 0 0 0 16 9z" fill="#e8413c" transform="rotate(67.500 16 16)"/><path d="M16 2a14 14 0 0 1 9.900 4.100l-4.950 4.950A7 7 0 0 0 16 9z" fill="#e8413c" transform="rotate(157.500 16 16)"/><path d="M16 2a14 14 0 0 1 9.900 4.100l-4.950 4.950A7 7 0 0 0 16 9z" fill="#e8413c" transform="rotate(247.500 16 16)"/></svg>
<svg style="left:1419px;top:6.25px;width:27px;height:27px" viewBox="0 0 32 32"><g transform="translate(-2,0)"><path d="M14 1C7 1 3 5 3 11c0 5 2 9 6 10l2-2c2 2 4 2 6 1v4c0 4 2 6 5 6h7v-3h-6c-2 0-2-1-2-3v-6c3-2 4-5 4-8 0-6-4-9-11-9z" fill="#ececec"/><path d="M10 5c-2 4-2 9-.5 13M18 4c3 4 3 9 1.500 13M13 9.500h2.500" stroke="#a9a9a9" stroke-width="1.500" fill="none"/></g><circle cx="6.500" cy="24.500" r="6.500" fill="#f2a91c"/><circle cx="6.500" cy="24.500" r="3.800" fill="#f9cc4a"/></svg>
<svg style="left:1461.5px;top:6.25px;width:27px;height:27px" viewBox="0 0 32 32"><rect x="3" y="4" width="26" height="22" fill="#f4f4f4" stroke="#c9c9c9"/><rect x="7" y="1.500" width="9" height="6" fill="#4bb7ee"/><path d="M18 9h8M18 12.500h8" stroke="#bdbdbd" stroke-width="1.400"/><circle cx="10" cy="18" r="4.500" fill="#f2c21c"/><circle cx="17" cy="19" r="4.500" fill="#f5d34a"/><path d="M24 18l7 12H17z" fill="#f7dc1e"/><path d="M24 22v4M24 27.500v1" stroke="#6b5a00" stroke-width="1.400"/></svg>
<svg style="left:557.5px;top:7px;width:25.5px;height:25.5px" viewBox="0 0 32 32"><rect x="0.5" y="0.5" width="9.600" height="9.600" fill="#565a67"/><rect x="11.2" y="0.5" width="9.600" height="9.600" fill="#565a67"/><rect x="21.9" y="0.5" width="9.600" height="9.600" fill="#565a67"/><rect x="0.5" y="11.2" width="9.600" height="9.600" fill="#565a67"/><rect x="11.2" y="11.2" width="9.600" height="9.600" fill="#565a67"/><rect x="21.9" y="11.2" width="9.600" height="9.600" fill="#565a67"/><rect x="0.5" y="21.9" width="9.600" height="9.600" fill="#565a67"/><rect x="11.2" y="21.9" width="9.600" height="9.600" fill="#565a67"/><rect x="21.9" y="21.9" width="9.600" height="9.600" fill="#565a67"/></svg>
<svg style="left:599.25px;top:7px;width:25.5px;height:25.5px" viewBox="0 0 32 32"><rect x="0.5" y="0.5" width="9.600" height="9.600" fill="#4b4f5b"/><rect x="11.2" y="0.5" width="9.600" height="9.600" fill="#4b4f5b"/><rect x="21.9" y="0.5" width="9.600" height="9.600" fill="#4b4f5b"/><rect x="0.5" y="11.2" width="9.600" height="9.600" fill="#4b4f5b"/><rect x="11.2" y="11.2" width="9.600" height="9.600" fill="#4b4f5b"/><rect x="21.9" y="11.2" width="9.600" height="9.600" fill="#4b4f5b"/><rect x="0.5" y="21.9" width="9.600" height="9.600" fill="#4b4f5b"/><rect x="11.2" y="21.9" width="9.600" height="9.600" fill="#4b4f5b"/><rect x="21.9" y="21.9" width="9.600" height="9.600" fill="#4b4f5b"/></svg>
<svg style="left:640.75px;top:6.75px;width:26px;height:26px" viewBox="0 0 32 32"><rect x="4" y="22" width="24" height="7" fill="#3a3e4a"/><circle cx="12" cy="9" r="4.500" fill="#3a3e4a"/><path d="M5 27L28 4" stroke="#6a6e7a" stroke-width="2.200"/></svg>
<div style="left:335.25px;top:3.75px;width:1.5px;height:32px;background:#2b2f42;"></div>
<div style="left:462.5px;top:3.75px;width:1.5px;height:32px;background:#2b2f42;"></div>
<div style="left:843px;top:3.75px;width:1.5px;height:32px;background:#2b2f42;"></div>
<div style="left:1158px;top:3.75px;width:1.5px;height:32px;background:#2b2f42;"></div>
<div style="left:1286.25px;top:3.75px;width:1.5px;height:32px;background:#2b2f42;"></div>
<div style="left:936px;top:6.75px;width:176.5px;height:27px;background:#1f2334;border-radius:3px"></div>
<svg style="left:942.25px;top:12.75px;width:15.5px;height:15.5px" viewBox="0 0 32 32"><path d="M3 9.84v16.32c0 4.992 26 4.992 26 0v-16.32z" fill="#5a5e6a"/><ellipse cx="16.0" cy="9.84" rx="13.0" ry="3.84" fill="#5a5e6a" stroke="#3e424e" stroke-width="1"/><path d="M3 15.280000000000001c0 4.992 26 4.992 26 0M3 20.72c0 4.992 26 4.992 26 0" stroke="#3e424e" stroke-width="1.200" fill="none"/></svg>
<span style="left:962.5px;top:20.25px;font-size:15.3px;color:#4f5466;transform:translate(0,-50%);">demodb</span>
<svg style="left:1096.5px;top:18px;width:8.5px;height:5px" viewBox="0 0 10 6"><path d="M0 0H10L5 6Z" fill="#6a6f82"/></svg>
</div></body></html>
